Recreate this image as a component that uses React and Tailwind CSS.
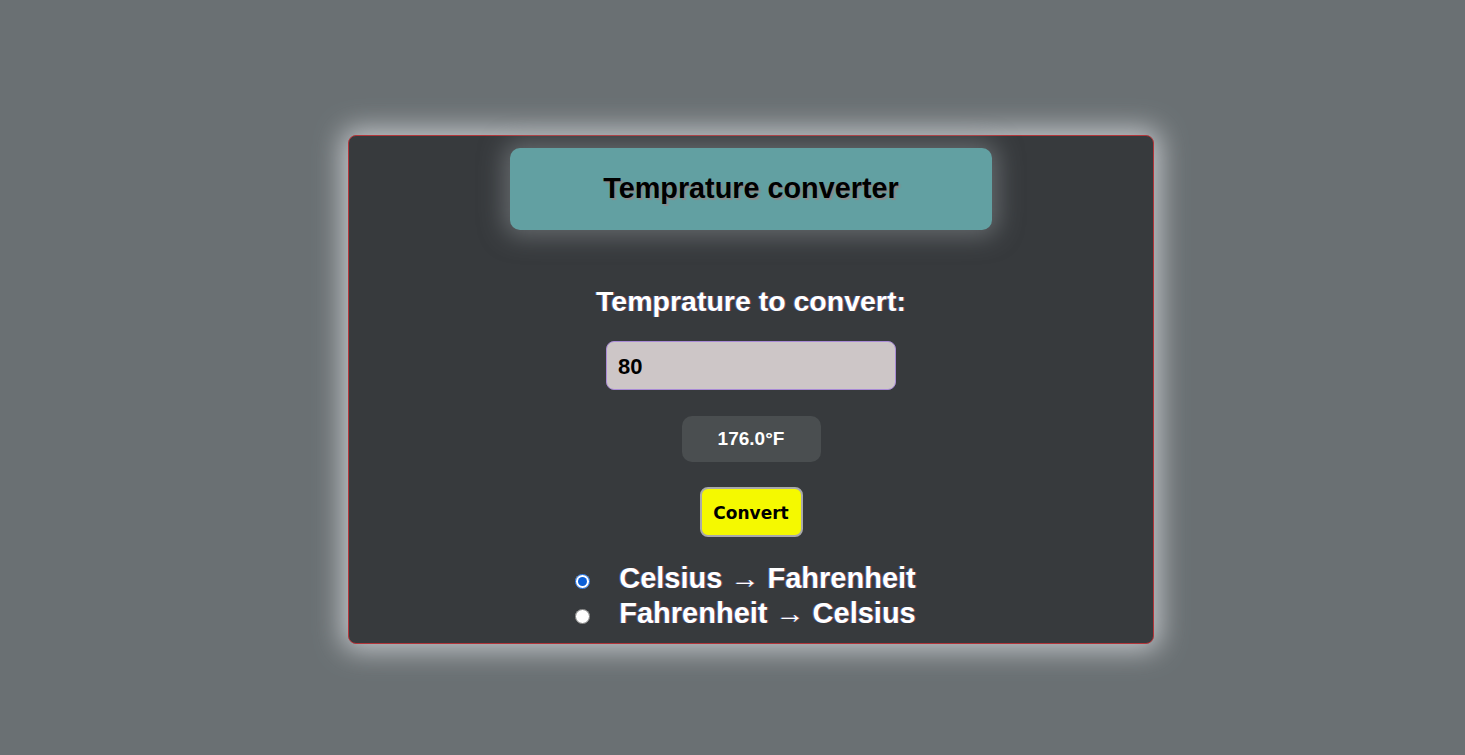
export default function App() {
  return (
    <div
      className="min-h-screen w-full bg-[#6a7073] flex justify-center pl-[37px] pt-[135px]"
      style={{ fontFamily: '"Liberation Sans", Arial, sans-serif' }}
    >
      <div className="w-[806px] h-[509px] bg-[#373a3d] border border-[#b3353a] rounded-[8px] shadow-[0_0_28px_6px_rgba(225,228,232,0.75)] flex flex-col items-center pt-[12px]">
        <div className="w-[482px] h-[82px] bg-[#62a0a2] rounded-[10px] shadow-[0_0_24px_6px_rgba(140,145,150,0.55)] flex items-center justify-center">
          <h1 className="text-[28.8px] font-bold text-black [text-shadow:2px_2px_1px_#8a8a8a]">
            Temprature converter
          </h1>
        </div>

        <p className="mt-[55px] text-[28.5px] leading-[32px] font-bold text-white [text-shadow:-1px_0_0_rgba(80,140,255,0.5),1px_0_0_rgba(255,90,90,0.4)]">
          Temprature to convert:
        </p>

        <input
          type="text"
          defaultValue="80"
          className="mt-[24px] w-[290px] h-[49px] bg-[#cdc6c7] border border-[#a98bd6] rounded-[8px] pl-[11px] pt-[2px] text-[22px] font-bold text-black outline-none"
        />

        <div className="mt-[26px] w-[139px] h-[46px] bg-[#4a4e50] rounded-[10px] flex items-center justify-center text-[19px] font-bold text-white">
          176.0°F
        </div>

        <button
          type="button"
          className="mt-[25px] w-[103px] h-[50px] bg-[#f5f900] border-2 border-[#a9a9a9] rounded-[8px] pt-[3px] text-[17px] font-bold text-black"
          style={{ fontFamily: '"DejaVu Sans", Verdana, sans-serif' }}
        >
          Convert
        </button>

        <div className="mt-[24px] w-full flex justify-center pr-[11px]">
          <div className="flex flex-col">
            <label className="flex items-center h-[35px] text-[29px] font-bold text-white [text-shadow:-1px_0_0_rgba(80,140,255,0.5),1px_0_0_rgba(255,90,90,0.4)]">
              <input type="radio" name="dir" defaultChecked className="w-[15px] h-[15px] m-0 mr-[29px] translate-y-[3px] accent-[#0b5fd6]" />
              Celsius → Fahrenheit
            </label>
            <label className="flex items-center h-[35px] text-[29px] font-bold text-white [text-shadow:-1px_0_0_rgba(80,140,255,0.5),1px_0_0_rgba(255,90,90,0.4)]">
              <input type="radio" name="dir" className="w-[15px] h-[15px] m-0 mr-[29px] translate-y-[3px] accent-[#0b5fd6]" />
              Fahrenheit → Celsius
            </label>
          </div>
        </div>
      </div>
    </div>
  );
}
